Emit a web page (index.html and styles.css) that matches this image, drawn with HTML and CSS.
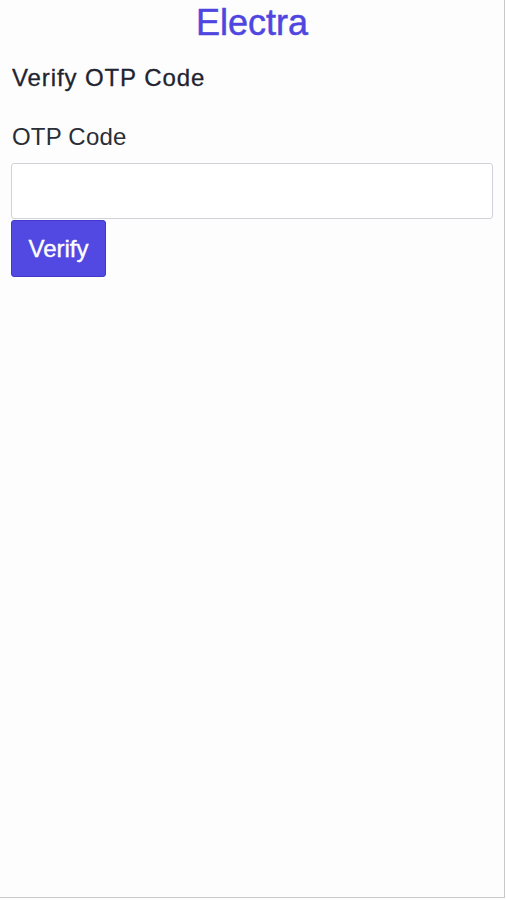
FILE: index.html
```html
<!DOCTYPE html>
<html>
<head>
<meta charset="UTF-8" />
<meta name="viewport" content="initial-scale=1.0, width=device-width" />
<title>Electra - Verify OTP</title>
<link rel="stylesheet" href="styles.css">
</head>
<body>
    <div class="frame">
        <h1 class="brand">Electra</h1>
        <form class="otp-form" onsubmit="return false;">
            <h2 class="form-title">Verify OTP Code</h2>
            <label class="field-label" for="otp">OTP Code</label>
            <input class="field-input" id="otp" type="text" name="otp" />
            <button class="btn-verify" type="submit">Verify</button>
        </form>
    </div>
</body>
</html>
```

FILE: styles.css
```css
html, body{
    margin:0px;
    padding:0px;
}
body {
    background: #fdfdfd;
    color: #1f2430;
    font-family: "Liberation Sans", Arial, Helvetica, sans-serif;
}

/* outer frame with the thin grey edge */
.frame{
    width:504px;
    height:897px;
    border-right:1px solid #c9c9c9;
    border-bottom:1px solid #c9c9c9;
}

.brand{
    margin:0px;
    font-size:36px;
    line-height:46px;
    font-weight:normal;
    text-align:center;
    color:#4f46e0;
    -webkit-text-stroke:0.5px #4f46e0;
}

.otp-form{
    display:flex;
    flex-direction:column;
    align-items:flex-start;
    padding:0px 11px;
}

.form-title{
    margin:16px 0px 0px 1px;
    font-size:24px;
    line-height:32px;
    font-weight:normal;
    letter-spacing:0.9px;
    -webkit-text-stroke:0.3px #1f2430;
}

.field-label{
    margin:27px 0px 0px 1px;
    font-size:24px;
    line-height:32px;
    letter-spacing:0.2px;
    color:#2a2e36;
}

.field-input{
    box-sizing:border-box;
    width:482px;
    height:56px;
    margin-top:10px;
    border:1px solid #cfd2d6;
    border-radius:3px;
    background:#fff;
    font-size:22px;
    padding:0px 10px;
}

.btn-verify{
    box-sizing:border-box;
    width:95px;
    height:57px;
    margin-top:1px;
    border:1px solid #4338ca;
    border-radius:3px;
    background:#5248e2;
    color:#fff;
    font-family:"Liberation Sans", Arial, Helvetica, sans-serif;
    font-size:24px;
    -webkit-text-stroke:0.4px #fff;
    padding:0px;
}
```
